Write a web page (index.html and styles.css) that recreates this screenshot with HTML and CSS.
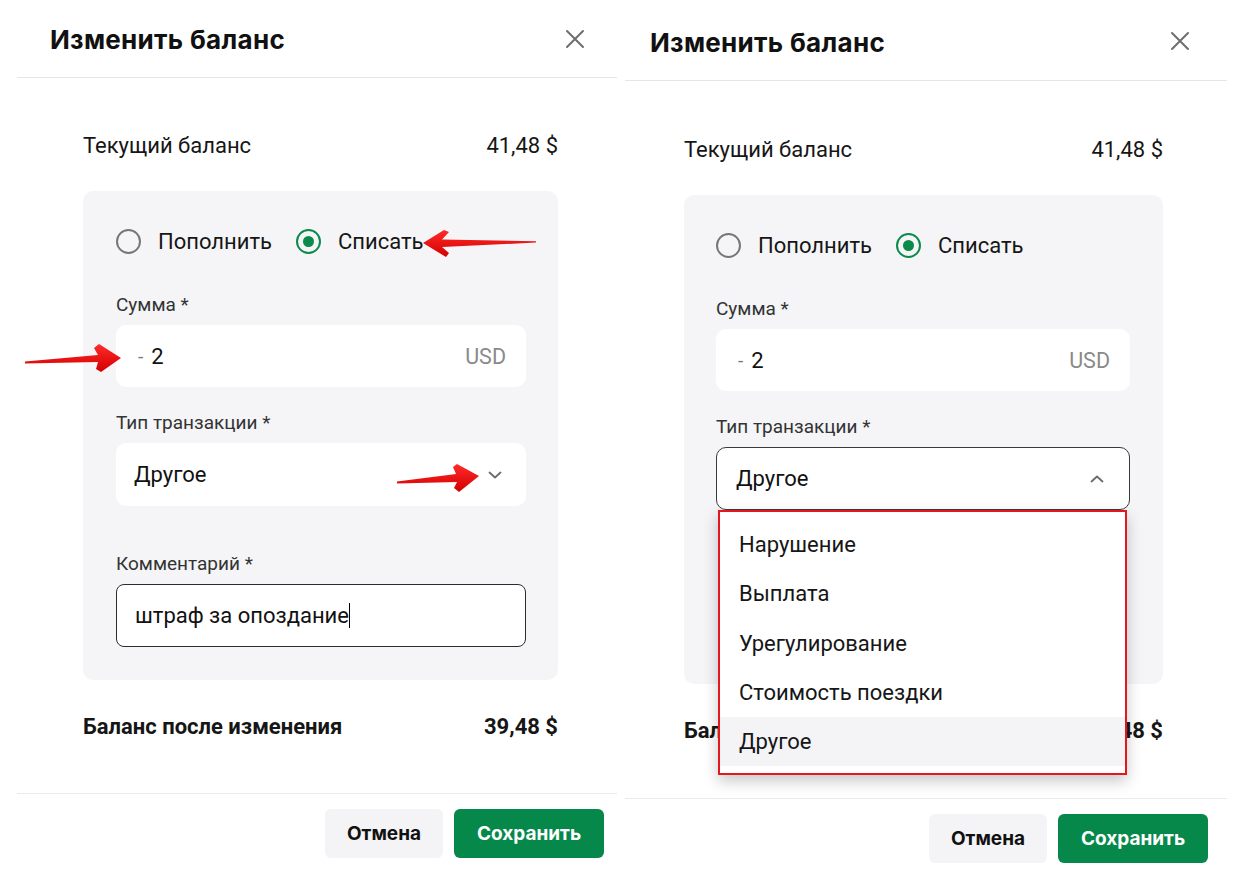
FILE: index.html
```html
<!DOCTYPE html>
<html lang="ru">
<head>
<meta charset="utf-8">
<title>Изменить баланс</title>
<link rel="stylesheet" href="styles.css">
</head>
<body>
<div class="page">
  <section class="panel panel--left">
    <header class="panel__head">
      <h2 class="panel__title">Изменить баланс</h2>
      <button class="close" aria-label="Закрыть"><svg width="20" height="20" viewBox="0 0 20 20"><path d="M2 2L18 18M18 2L2 18" stroke="#6e6e6e" stroke-width="2" stroke-linecap="round"/></svg></button>
    </header>
    <div class="panel__body">
      <div class="sum-row"><span>Текущий баланс</span><span>41,48 $</span></div>
      <div class="box">
        <div class="radios">
          <label class="radio"><span class="radio__dot"></span>Пополнить</label>
          <label class="radio radio--on"><span class="radio__dot"></span>Списать</label>
        </div>
        <div class="field field--first">
          <div class="field__label">Сумма *</div>
          <div class="input"><span class="input__minus">-</span><span class="input__val">2</span><span class="input__unit">USD</span></div>
        </div>
        <div class="field field--second">
          <div class="field__label">Тип транзакции *</div>
          <div class="input input--select"><span class="input__val">Другое</span><svg class="chev" width="14" height="8" viewBox="0 0 14 8"><path d="M1.5 1.5L7 6.5L12.5 1.5" fill="none" stroke="#6b6b6b" stroke-width="1.8" stroke-linecap="round" stroke-linejoin="round"/></svg></div>
        </div>
        <div class="field field--third">
          <div class="field__label">Комментарий *</div>
          <div class="input input--bordered"><span class="input__val">штраф за опоздание</span><span class="caret"></span></div>
        </div>
      </div>
      <div class="sum-row sum-row--bold"><span>Баланс после изменения</span><span>39,48 $</span></div>
    </div>
    <footer class="panel__foot">
      <button class="btn btn--ghost">Отмена</button>
      <button class="btn btn--primary">Сохранить</button>
    </footer>
  </section>

  <section class="panel panel--right">
    <header class="panel__head">
      <h2 class="panel__title">Изменить баланс</h2>
      <button class="close" aria-label="Закрыть"><svg width="20" height="20" viewBox="0 0 20 20"><path d="M2 2L18 18M18 2L2 18" stroke="#6e6e6e" stroke-width="2" stroke-linecap="round"/></svg></button>
    </header>
    <div class="panel__body">
      <div class="sum-row"><span>Текущий баланс</span><span>41,48 $</span></div>
      <div class="box">
        <div class="radios">
          <label class="radio"><span class="radio__dot"></span>Пополнить</label>
          <label class="radio radio--on"><span class="radio__dot"></span>Списать</label>
        </div>
        <div class="field field--first">
          <div class="field__label">Сумма *</div>
          <div class="input"><span class="input__minus">-</span><span class="input__val">2</span><span class="input__unit">USD</span></div>
        </div>
        <div class="field field--second">
          <div class="field__label">Тип транзакции *</div>
          <div class="select-wrap">
            <div class="input input--select input--open"><span class="input__val">Другое</span><svg class="chev" width="14" height="8" viewBox="0 0 14 8"><path d="M1.5 6.5L7 1.5L12.5 6.5" fill="none" stroke="#6b6b6b" stroke-width="1.8" stroke-linecap="round" stroke-linejoin="round"/></svg></div>
            <ul class="menu">
              <li class="menu__item">Нарушение</li>
              <li class="menu__item">Выплата</li>
              <li class="menu__item">Урегулирование</li>
              <li class="menu__item">Стоимость поездки</li>
              <li class="menu__item menu__item--active">Другое</li>
            </ul>
          </div>
        </div>
        <div class="field field--third field--covered">
          <div class="field__label">Комментарий *</div>
          <div class="input input--bordered"><span class="input__val">штраф за опоздание</span></div>
        </div>
      </div>
      <div class="sum-row sum-row--bold"><span>Баланс после изменения</span><span>39,48 $</span></div>
    </div>
    <footer class="panel__foot">
      <button class="btn btn--ghost">Отмена</button>
      <button class="btn btn--primary">Сохранить</button>
    </footer>
  </section>

  <svg class="annotations" width="1256" height="888" viewBox="0 0 1256 888">
    <defs>
      <linearGradient id="ar" x1="0" y1="0" x2="0" y2="1">
        <stop offset="0" stop-color="#ff2a2a"/>
        <stop offset="1" stop-color="#d40000"/>
      </linearGradient>
    </defs>
    <polygon fill="url(#ar)" points="423,243 444,230 449,232 442,239.5 536,241.2 536,242.6 442,247 449,253 446,257"/>
    <polygon fill="url(#ar)" points="25,361.5 98,355 94,348 99,344 121,358 101,372 96,369 98,362 25,363.5"/>
    <polygon fill="url(#ar)" points="397,481.5 456,474 453,467 457,464 479,476 459,492 454,488 457,482 397,483.5"/>
  </svg>
</div>
</body>
</html>
```

FILE: styles.css
```css
* { box-sizing: border-box; }
html, body { margin: 0; padding: 0; background: #ffffff; }
body {
  font-family: Roboto, "Liberation Sans", Arial, sans-serif;
  color: #111;
}
.page {
  position: relative;
  width: 1256px;
  height: 888px;
  display: flex;
  align-items: flex-start;
  gap: 8px;
  padding-left: 17px;
  overflow: hidden;
}
.panel {
  width: 600px;
  display: flex;
  flex-direction: column;
  background: #fff;
}
.panel--right {
  width: 602px;
  margin-top: 2px;
}
.panel__head {
  height: 78px;
  border-bottom: 1px solid #e6e6e8;
  display: flex;
  align-items: center;
  justify-content: space-between;
  padding: 0 31px 0 33px;
}
.panel--right .panel__head { padding: 0 36px 0 25px; height: 79px; }
.panel__title {
  margin: 0;
  font-family: Inter, "Open Sans", sans-serif;
  font-weight: 700;
  font-size: 26px;
  letter-spacing: 0.3px;
  color: #111;
  padding-top: 2px;
}
.close {
  border: 0;
  background: none;
  padding: 0;
  width: 22px;
  height: 22px;
  display: flex;
  align-items: center;
  justify-content: center;
}
.panel__body {
  padding: 55px 59px 55px 66px;
  display: flex;
  flex-direction: column;
}
.panel--right .panel__body { padding: 56px 64px 56px 59px; }
.sum-row {
  height: 24px;
  display: flex;
  align-items: center;
  justify-content: space-between;
  font-size: 22px;
  color: #161616;
}
.sum-row--bold { font-weight: 700; margin-top: 34px; }
.box {
  margin-top: 34px;
  background: #f5f5f7;
  border-radius: 10px;
  padding: 38px 32px 33px 33px;
}
.panel--right .box { padding: 38px 33px 33px 32px; }
.radios {
  height: 24px;
  display: flex;
  align-items: center;
  gap: 24px;
}
.radio {
  display: flex;
  align-items: center;
  gap: 17px;
  font-size: 22px;
  color: #161616;
}
.radio__dot {
  width: 25px;
  height: 25px;
  border-radius: 50%;
  border: 2.5px solid #777;
  display: flex;
  align-items: center;
  justify-content: center;
}
.radio--on .radio__dot { border-color: #0a8a4b; }
.radio--on .radio__dot::after {
  content: "";
  width: 11px;
  height: 11px;
  border-radius: 50%;
  background: #0a8a4b;
}
.field__label {
  height: 20px;
  line-height: 20px;
  font-size: 19px;
  color: #333;
  margin-bottom: 10px;
}
.field--first { margin-top: 42px; }
.field--second { margin-top: 26px; }
.field--third { margin-top: 48px; }
.field--covered { visibility: hidden; }
.input {
  height: 62px;
  background: #fff;
  border-radius: 10px;
  display: flex;
  align-items: center;
  padding: 0 20px 0 22px;
  font-size: 22px;
  color: #111;
}
.input__minus { color: #777; font-size: 19px; margin-right: 8px; }
.input__unit { margin-left: auto; color: #8a8a8a; font-size: 21.5px; }
.input--select { height: 63px; padding: 0 24px 0 18px; }
.input--select .chev { margin-left: auto; }
.input--open { border: 1px solid #3a3a3a; padding: 0 25px 0 19px; }
.input--bordered { height: 63px; border: 1px solid #2c2c2c; border-radius: 8px; padding: 0 18px; }
.caret {
  display: inline-block;
  width: 1.5px;
  height: 25px;
  background: #000;
}
.select-wrap { position: relative; }
.menu {
  position: absolute;
  left: 2px;
  right: 3px;
  top: 63px;
  margin: 0;
  padding: 8px 0 7px;
  list-style: none;
  background: #fff;
  border: 2px solid #e3171f;
  box-shadow: 0 6px 14px rgba(0, 0, 0, 0.22);
  z-index: 5;
}
.menu__item {
  height: 49.3px;
  display: flex;
  align-items: center;
  padding-left: 19px;
  font-size: 22px;
  color: #161616;
}
.menu__item--active { background: #f4f4f6; }
.panel__foot {
  border-top: 1px solid #eaeaec;
  padding: 15px 13px 14px;
  display: flex;
  justify-content: flex-end;
  gap: 11px;
}
.panel--right .panel__foot { padding: 15px 19px 14px; }
.btn {
  height: 49px;
  border: 0;
  border-radius: 6px;
  font-family: Inter, "Open Sans", sans-serif;
  font-weight: 700;
  font-size: 19px;
}
.btn--ghost { width: 118px; background: #f4f4f6; color: #111; }
.btn--primary { width: 150px; background: #06884a; color: #fff; }
.annotations {
  position: absolute;
  left: 0;
  top: 0;
  pointer-events: none;
  z-index: 10;
}
```
